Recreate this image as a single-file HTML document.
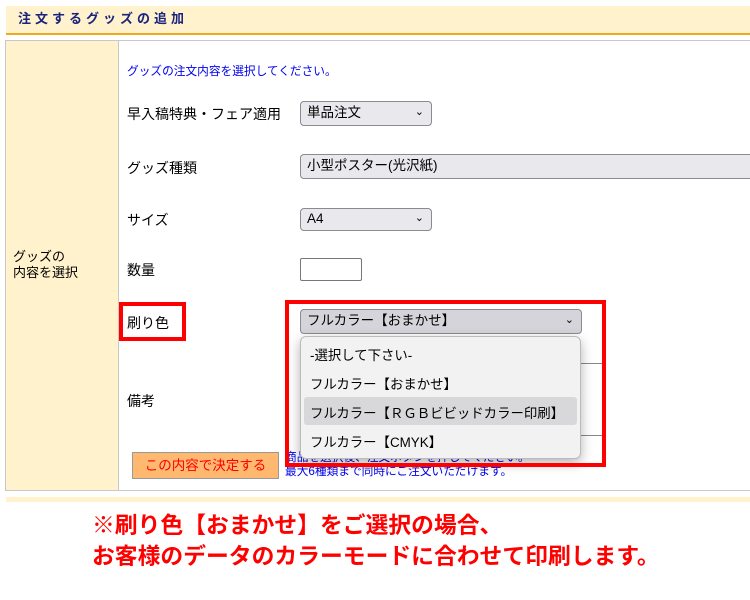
<!DOCTYPE html><html><head><meta charset="utf-8"><style>
body{margin:0;width:750px;height:600px;background:#fff;position:relative;overflow:hidden;font-family:"Liberation Sans","Noto Sans CJK JP",sans-serif;font-size:14px;color:#000}
.a{position:absolute;white-space:nowrap}
.o{font-size:13.4px}
.sel{position:absolute;box-sizing:border-box;border:1px solid #8a8a8f;border-radius:4px;background:#e9e9ed;font-size:13.5px;padding-left:6px;line-height:22px}
.chev{position:absolute;right:7px;top:-1px;font-size:11px}
.rb{position:absolute;border:4px solid #f00;box-sizing:border-box}
</style></head><body>
<div class="a" style="left:6px;top:6px;width:744px;height:27px;background:#fff2cc;border-bottom:2px solid #f0a820"></div>
<div class="a" style="left:18px;top:10px;font-weight:bold;color:#1a237e;font-size:13px;letter-spacing:4px;line-height:18px">注文するグッズの追加</div>
<div class="a" style="left:5px;top:40px;width:745px;height:449px;border-top:1px solid #c8c8c8;border-bottom:1px solid #c8c8c8;border-left:1px solid #c8c8c8"></div>
<div class="a" style="left:6px;top:41px;width:112px;height:449px;background:#fff2cc;border-right:1px solid #c8c8c8"></div>
<div class="a" style="left:13px;top:249px;line-height:16px;font-size:13px">グッズの<br>内容を選択</div>
<div class="a" style="left:127px;top:62px;color:#0000ee;font-size:11.7px">グッズの注文内容を選択してください。</div>
<div class="a" style="left:127px;top:104px">早入稿特典・フェア適用</div>
<div class="sel" style="left:300px;top:101px;width:132px;height:25px">単品注文<span class="chev">⌄</span></div>
<div class="a" style="left:127px;top:158px">グッズ種類</div>
<div class="sel" style="left:300px;top:154px;width:460px;height:25px">小型ポスター(光沢紙)</div>
<div class="a" style="left:127px;top:210px">サイズ</div>
<div class="sel" style="left:300px;top:208px;width:132px;height:23px;line-height:20px">A4<span class="chev">⌄</span></div>
<div class="a" style="left:127px;top:260px">数量</div>
<div class="a" style="left:300px;top:258px;width:62px;height:23px;border:1px solid #777;border-radius:2px;box-sizing:border-box"></div>
<div class="a" style="left:127px;top:313px">刷り色</div>
<div class="rb" style="left:119px;top:302px;width:67px;height:39px"></div>
<div class="a" style="left:300px;top:363px;width:304px;height:73px;border:1px solid #888;box-sizing:border-box"></div>
<div class="a" style="left:127px;top:391px">備考</div>
<div class="a" style="left:132px;top:452px;width:147px;height:27px;background:#ffb870;border:1px solid #999;box-sizing:border-box;color:#f00;text-align:center;line-height:25px;font-size:13.5px">この内容で決定する</div>
<div class="a" style="left:285px;top:451px;color:#0000ee;font-size:11.7px;line-height:14px">商品を選択後、注文ボタンを押してください。<br>最大6種類まで同時にご注文いただけます。</div>
<div class="sel" style="left:300px;top:309px;width:282px;height:25px;background:#d4d4da">フルカラー【おまかせ】<span class="chev">⌄</span></div>
<div class="a" style="left:300px;top:336px;width:281px;height:123px;background:#f2f2f2;border:1px solid #bbb;border-radius:6px;box-sizing:border-box;box-shadow:0 4px 12px rgba(0,0,0,.3)"></div>
<div class="a" style="left:304px;top:397px;width:273px;height:28px;background:#d8d8da;border-radius:3px"></div>
<div class="a o" style="left:310px;top:344px">-選択して下さい-</div>
<div class="a o" style="left:310px;top:373px">フルカラー【おまかせ】</div>
<div class="a o" style="left:310px;top:402px">フルカラー【ＲＧＢビビッドカラー印刷】</div>
<div class="a o" style="left:310px;top:431px">フルカラー【CMYK】</div>
<div class="rb" style="left:285px;top:300px;width:321px;height:167px"></div>
<div class="a" style="left:6px;top:497px;width:744px;height:5px;background:#fff2cc"></div>
<div class="a" style="left:92px;top:510px;color:#f00;font-size:22.8px;font-weight:bold;line-height:31px">※刷り色【おまかせ】をご選択の場合、<br>お客様のデータのカラーモードに合わせて印刷します。</div>
</body></html>
